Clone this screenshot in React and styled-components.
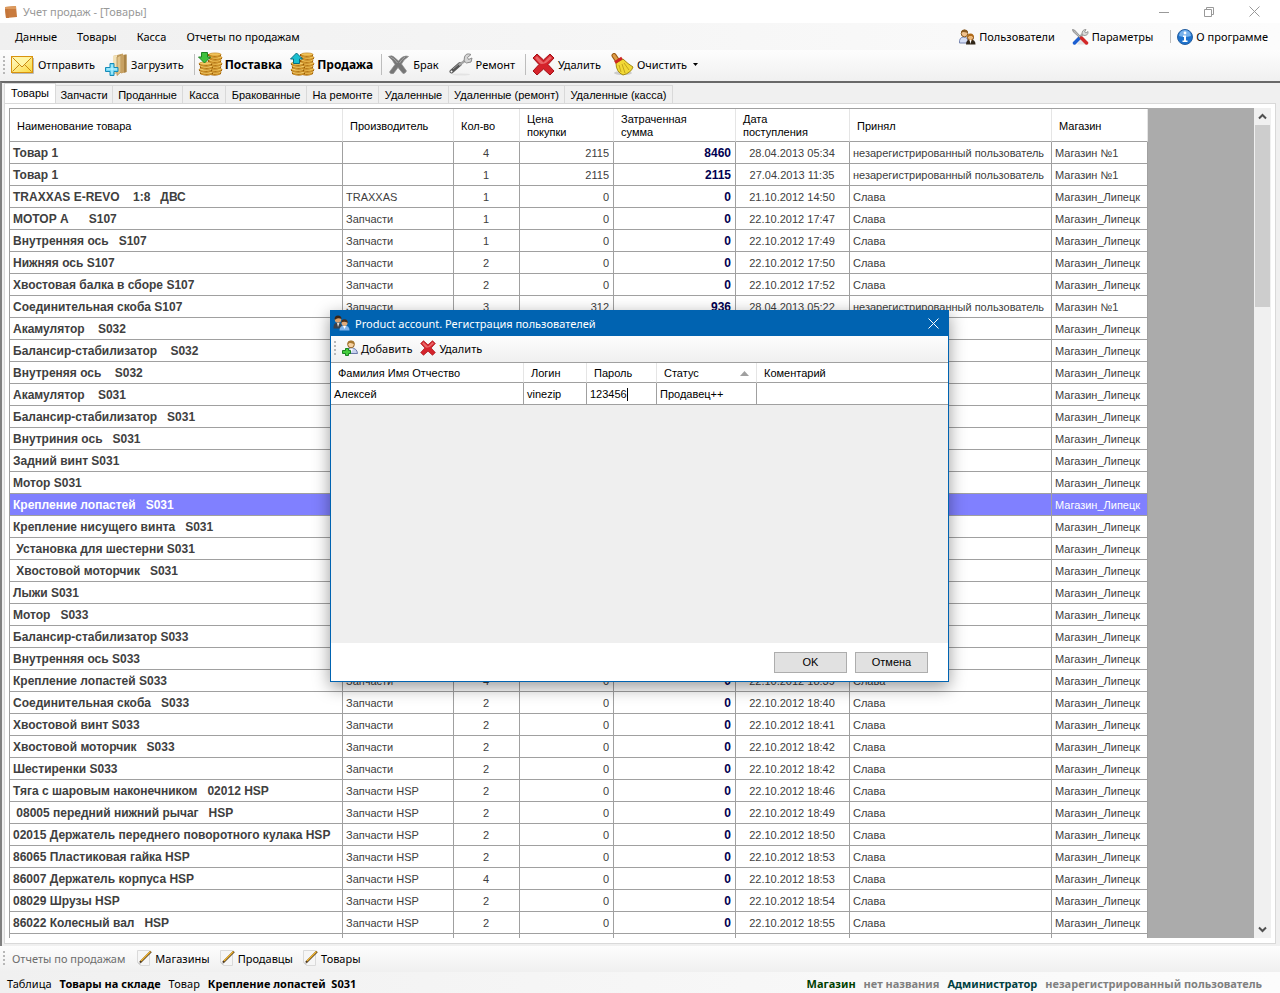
import React from 'react';
import styled, { createGlobalStyle } from 'styled-components';

const GlobalStyle = createGlobalStyle`
  * {
    box-sizing: border-box;
  }
  body {
    margin: 0;
    background: #f0f0f0;
    color: #000;
    font: 11px 'Noto Sans', 'Open Sans', sans-serif;
  }
  button, input {
    font: inherit;
    color: inherit;
    margin: 0;
    padding: 0;
    border: 0;
    background: none;
  }
  svg {
    display: block;
    flex: none;
  }
`;

const Window = styled.div`
  position: relative;
  display: flex;
  flex-direction: column;
  height: 100vh;
  overflow: hidden;
`;

/* title bar */
const TitleBar = styled.header`
  display: flex;
  align-items: center;
  height: 23px;
  padding: 0 9px 0 4px;
  gap: 5px;
  background: #fff;
  color: #999;
`;
const Title = styled.h1`
  flex: 1;
  margin: 0;
  font-size: 11px;
  font-weight: 400;
`;
const WindowButton = styled.button`
  display: flex;
  align-items: center;
  justify-content: center;
  width: 34px;
  height: 20px;
  margin-left: 6px;
`;

/* menu */
const MenuBar = styled.nav`
  display: flex;
  align-items: center;
  height: 27px;
  padding: 0 12px 0 15px;
  background: linear-gradient(to right, #f0f0f0, #fcfcfc);
`;
const MenuItem = styled.button`
  display: flex;
  align-items: center;
  gap: 3px;
  margin-right: ${(props) => props.gap ?? 20}px;
`;
const Spacer = styled.div`
  flex: 1;
`;

/* tool strips */
const Toolbar = styled.div`
  display: flex;
  align-items: center;
  height: ${(props) => props.height}px;
  padding: 0 0 2px 3px;
  background: linear-gradient(#fdfdfd, #f0f0f0);
  border-radius: 0 0 3px 0;
`;
const Grip = styled.div`
  width: 2px;
  height: ${(props) => props.height}px;
  margin-right: ${(props) => props.gap}px;
  background: repeating-linear-gradient(#b8b8b8 0 2px, transparent 2px 4px);
`;
const ToolButton = styled.button`
  display: flex;
  align-items: center;
  gap: ${(props) => props.gap || 3}px;
  margin-right: ${(props) => props.space || 10}px;
  font-size: ${(props) => (props.strong ? 12 : 11)}px;
  font-weight: ${(props) => (props.strong ? 700 : 400)};
  white-space: nowrap;
`;
const Separator = styled.div`
  width: 1px;
  height: ${(props) => props.height || 21}px;
  margin-right: ${(props) => props.gap || 6}px;
  background: #bdbdbd;
`;

/* tabs and grid */
const Workspace = styled.main`
  display: flex;
  flex-direction: column;
  flex: 1;
  min-height: 0;
  padding: 0 4px 2px 2px;
  border-top: 2px solid #696969;
  border-left: 2px solid #808080;
`;
const TabList = styled.div`
  display: flex;
  align-items: flex-end;
  height: 20px;
  font-family: 'Liberation Sans', sans-serif;
`;
const Tab = styled.button`
  height: ${(props) => (props.active ? 20 : 18)}px;
  width: ${(props) => props.width}px;
  padding-bottom: ${(props) => (props.active ? 2 : 0)}px;
  border: 1px solid #d9d9d9;
  border-left-width: ${(props) => (props.active ? 1 : 0)}px;
  border-bottom: 0;
  background: ${(props) => (props.active ? '#fff' : '#f0f0f0')};
  white-space: nowrap;
`;
const Panel = styled.section`
  display: flex;
  flex: 1;
  min-height: 0;
  padding: 4px 4px 5px 4px;
  border: 1px solid #d9d9d9;
  background: #fff;
`;
const GridArea = styled.div`
  flex: 1;
  min-width: 0;
  overflow: hidden;
  background: #ababab;
`;
const Grid = styled.table`
  table-layout: fixed;
  width: ${(props) => props.width};
  border-collapse: separate;
  border-spacing: 0;
  border-top: 1px solid #a0a0a0;
  border-left: ${(props) => (props.flush ? 0 : 1)}px solid #a0a0a0;
  background: #fff;
  font-family: 'Liberation Sans', sans-serif;
  font-size: 11px;
  line-height: 13px;

  th:last-child,
  td:last-child {
    border-right-width: ${(props) => (props.flush ? 0 : 1)}px;
  }
`;
const HeadCell = styled.th`
  height: ${(props) => props.height}px;
  padding: 2px 7px 0;
  border-right: 1px solid #e5e5e5;
  border-bottom: 1px solid #a0a0a0;
  font-weight: 400;
  text-align: left;
  white-space: pre-line;
`;
const Row = styled.tr`
  height: 22px;
  background: ${(props) => (props.selected ? '#8080ff' : '#fff')};
  color: ${(props) => (props.selected ? '#fff' : '#404040')};
`;
const Cell = styled.td`
  height: 22px;
  padding: 2px 4px 0 3px;
  border-right: 1px solid #a0a0a0;
  border-bottom: 1px solid #a0a0a0;
  text-align: ${(props) => props.align || 'left'};
  white-space: pre;
  overflow: hidden;
`;
const NameCell = styled(Cell)`
  font-size: 12px;
  font-weight: 700;
`;
const SumCell = styled(Cell)`
  color: #000050;
  font-size: 12px;
  font-weight: 700;
`;
const ScrollBar = styled.div`
  display: flex;
  flex-direction: column;
  align-items: center;
  width: 17px;
  padding: 0 1px;
  background: #f0f0f0;
`;
const ScrollArrow = styled.button`
  display: flex;
  align-items: center;
  justify-content: center;
  width: 15px;
  height: 17px;
`;
const ScrollThumb = styled.div`
  width: 15px;
  height: 182px;
  background: #cdcdcd;
`;

/* status bar */
const StatusBar = styled.footer`
  display: flex;
  align-items: center;
  height: 21px;
  padding: 2px 18px 0 7px;
  gap: 8px;
  background: linear-gradient(to right, #f0f0f0, #fcfcfc);
  white-space: pre;
`;
const StatusText = styled.span`
  color: ${(props) => props.color || '#000'};
  font-weight: ${(props) => (props.strong ? 700 : 400)};
`;
const Muted = styled.span`
  margin-right: 12px;
  color: #6d6d6d;
`;

/* dialog */
const Overlay = styled.div`
  position: absolute;
  inset: 0 1px 1px 0;
  display: flex;
  align-items: center;
  justify-content: center;
`;
const Dialog = styled.div`
  display: flex;
  flex-direction: column;
  width: 619px;
  height: 372px;
  border: 1px solid #0063b1;
  background: #fff;
  box-shadow: 0 5px 16px rgba(0, 0, 0, 0.4);
`;
const DialogTitle = styled.div`
  display: flex;
  align-items: center;
  height: 25px;
  padding: 0 9px 1px 2px;
  gap: 5px;
  background: #0063b1;
  color: #fff;
`;
const DialogHeading = styled.h2`
  flex: 1;
  margin: 0;
  font-size: 11px;
  font-weight: 400;
`;
const DialogBody = styled.div`
  flex: 1;
  background: #efefef;
`;
const SortHead = styled.div`
  display: flex;
  align-items: center;
  justify-content: space-between;
`;
const PasswordInput = styled.input`
  display: block;
  width: 38px;
  height: 13px;
  border-right: 1px solid #000;
`;
const DialogFooter = styled.div`
  display: flex;
  align-items: center;
  justify-content: flex-end;
  gap: 8px;
  height: 38px;
  padding-right: 20px;
  font-family: 'Liberation Sans', sans-serif;
`;
const DialogButton = styled.button`
  width: 73px;
  height: 21px;
  border: 1px solid #adadad;
  background: #e1e1e1;
`;

/* icons */
const BoxIcon = () => (
  <svg width="14" height="14" viewBox="0 0 14 14">
    <path d="M1 2 L12 1 L13 12 L2 13 Z" fill="#c97b3e" />
    <path d="M1 2 L12 1 L12 4 L1 4 Z" fill="#dc9a5e" />
    <path d="M1 4 L2 13 L5 13 L4 4 Z" fill="#c4763a" />
  </svg>
);
const MailIcon = () => (
  <svg width="23" height="18" viewBox="0 0 23 18">
    <defs>
      <linearGradient id="mail" x1="0" y1="0" x2="1" y2="1">
        <stop offset="0" stopColor="#fffbd0" />
        <stop offset="1" stopColor="#fbd93c" />
      </linearGradient>
    </defs>
    <path d="M1 17.5 H22.5 V2" stroke="#b9b9b9" fill="none" />
    <rect x="0.5" y="0.5" width="21" height="16" fill="url(#mail)" stroke="#d9930d" />
    <path d="M1.5 15.5 L8.5 8.5 M20.5 15.5 L13.5 8.5" stroke="#c88912" />
    <path d="M1.5 1.5 L11 11 L20.5 1.5" fill="#fff6a4" stroke="#c88912" />
  </svg>
);
const LoadIcon = () => (
  <svg width="23" height="24" viewBox="0 0 23 24">
    <path d="M8 3 L18 0.5 V19 L8 21 Z" fill="#c9a566" />
    <path d="M8 3 L12 2 V19 L8 20.5 Z" fill="#f3e2b8" />
    <path d="M12 4 L16 2 V19 L12 22.5 Z" fill="#e2c48a" stroke="#a88449" strokeWidth="0.7" />
    <path d="M16 2 L21.5 1.5 V19 L16 20.5 Z" fill="#c7a163" />
    <path d="M19 2 L21.5 1.5 V19 L19 19.8 Z" fill="#a98346" />
    <path d="M5 10.5 H9 V14.5 H13 V18.5 H9 V22.5 H5 V18.5 H0.5 V14.5 H5 Z" fill="#72d8f5" stroke="#168bb8" />
    <path d="M7 12 V21 M2 16 H12" stroke="#c5f5ff" />
  </svg>
);
const CoinsIcon = ({ up }) => (
  <svg width="25" height="25" viewBox="0 0 25 25">
    {[21, 18, 15, 12, 9, 6, 3].map((y, i) => (
      <g key={y}>
        <path d={`M${10 + (i % 2)} ${y - 1} V${y + 1} Q17 ${y + 4} ${23 + (i % 2)} ${y + 1} V${y - 1} Z`} fill="#935505" />
        <path d={`M${11 + (i % 2)} ${y + 1} Q17 ${y + 3} ${22 + (i % 2)} ${y + 1}`} stroke="#d99f33" fill="none" />
        <ellipse cx={17 + (i % 2)} cy={y - 0.5} rx="6" ry="1.6" fill="#f0c258" stroke="#c08018" strokeWidth="0.6" />
      </g>
    ))}
    {[21, 18, 15, 12].map((y, i) => (
      <g key={y}>
        <path d={`M${2 - (i % 2)} ${y - 1} V${y + 1} Q9 ${y + 4} ${15 - (i % 2)} ${y + 1} V${y - 1} Z`} fill="#8e5204" />
        <path d={`M${3 - (i % 2)} ${y + 1} Q9 ${y + 3} ${14 - (i % 2)} ${y + 1}`} stroke="#d89d30" fill="none" />
        <ellipse cx={8.5 - (i % 2)} cy={y - 0.5} rx="6.3" ry="1.6" fill="#f3ca66" stroke="#bd7d18" strokeWidth="0.6" />
      </g>
    ))}
    {up ? (
      <path d="M6.5 1 L12.5 7 H9.5 V11.5 H3.5 V7 H0.5 Z" fill="#19bfd0" stroke="#0a6e80" />
    ) : (
      <path d="M3.5 0.5 H9.5 V5 H12.5 L6.5 11 L0.5 5 H3.5 Z" fill="#3fc13c" stroke="#1d8222" />
    )}
  </svg>
);
const ScrapIcon = () => (
  <svg width="21" height="20" viewBox="0 0 21 20">
    <path
      d="M0.5 1.5 Q4 0 6 2 L10.5 6 Q14 1 18 1 L20.5 1.5 Q16 4 13.5 9 L18.5 16 Q17 19 15 18.5 L10 12.5 L5.5 18.5 Q2 19.5 1.5 17 L7 9.5 Q5 5 0.5 1.5 Z"
      fill="#767676"
      stroke="#8c8c8c"
      strokeWidth="0.7"
      strokeLinejoin="round"
    />
    <path d="M2.5 2 Q6 3 9.5 8 M17 2 Q13 5 11.5 8" stroke="#a8a8a8" fill="none" />
  </svg>
);
const WrenchIcon = () => (
  <svg width="24" height="23" viewBox="0 0 24 23">
    <ellipse cx="12" cy="21.5" rx="9" ry="1" fill="#e3e3e3" />
    <path d="M2.5 18.5 L11 11" stroke="#555" strokeWidth="4" strokeLinecap="round" />
    <path d="M4 16 L11 10" stroke="#999" strokeWidth="1" />
    <path d="M10 12 L17 7" stroke="#a5a5a5" strokeWidth="2.5" />
    <path
      d="M15 8 L17.5 10 L22 9 L23 5 L19.5 6.5 L18.5 4.5 L22 1.5 Q17 -0.5 15.5 4 Z"
      fill="#d5d5d5"
      stroke="#8b8b8b"
    />
    <circle cx="2.5" cy="18.5" r="1" fill="#fff" />
  </svg>
);
const DeleteIcon = ({ size = 23 }) => (
  <svg width={size} height={size} viewBox="0 0 23 23">
    <path
      d="M5 1 L11.5 7 L18 1 L22 5 L16 11.5 L22 18 L18 22 L11.5 16 L5 22 L1 18 L7 11.5 L1 5 Z"
      fill="#d5232b"
      stroke="#a31016"
      strokeLinejoin="round"
    />
    <path d="M3 5 L5 3 L11.5 9.5 L18 3 L20 5 L14 10 Q9 12 7.5 10 Z" fill="#f07c7c" opacity="0.75" />
  </svg>
);
const BroomIcon = () => (
  <svg width="23" height="23" viewBox="0 0 23 23">
    <ellipse cx="12" cy="20" rx="9" ry="2" fill="#ccc" />
    <path d="M3 2.5 L6 7" stroke="#9a5a14" strokeWidth="5" strokeLinecap="round" />
    <path d="M3 2.5 L6 7" stroke="#df9d47" strokeWidth="3" strokeLinecap="round" />
    <path d="M5 10 L12 6 Q17 11 22 14 Q20 20 12 22 Q5 19 5 10 Z" fill="#f1d835" stroke="#a48b12" />
    <path d="M8 12 L10 19 M11 11 L14 20 M13 10 L18 17" stroke="#c4a51b" />
    <path d="M4 9.5 L11 5" stroke="#cf2521" strokeWidth="3" />
  </svg>
);
const UsersIcon = () => (
  <svg width="17" height="16" viewBox="0 0 17 16">
    <path d="M0.5 14 Q0 8 5 8 Q9 8 9.5 14 Z" fill="#d5def5" stroke="#7685b0" />
    <circle cx="5.5" cy="4.5" r="3.3" fill="#f1c28d" stroke="#885922" />
    <path d="M2 4 Q2 0.5 5.5 0.5 Q9 0.5 9 4 Q6 3 4 3 Z" fill="#885921" />
    <path d="M7 15.5 Q7 10.5 11.5 10.5 Q16.5 10.5 16.5 15.5 Z" fill="#312719" />
    <circle cx="11.5" cy="8.5" r="3" fill="#edb879" stroke="#77420d" />
    <path d="M8 9 Q8 4.5 11.5 4.5 Q15 4.5 15 9 L13 7 H10 Z" fill="#b06a18" />
    <path d="M10.5 11 L11.5 15 L12.5 11 Z" fill="#fff" />
  </svg>
);
const AccountsIcon = () => (
  <svg width="17" height="16" viewBox="0 0 17 16">
    <path d="M0.5 13.5 Q0 7.5 5 7.5 Q9 7.5 9 13.5 Z" fill="#3d4148" />
    <circle cx="5" cy="4.5" r="3.2" fill="#d9a06c" />
    <path d="M1.5 4.5 Q1.5 0.5 5 0.5 Q8.5 0.5 8.5 4 Q5 2.5 2.5 4.5 Z" fill="#3a2415" />
    <path d="M4 8 L5 12 L6.5 8 Z" fill="#e9e4dc" />
    <path d="M6.5 15.5 Q6.5 10.5 11.5 10.5 Q16.5 10.5 16.5 15.5 Z" fill="#7db2ea" />
    <circle cx="11.5" cy="8" r="3" fill="#e0ab7c" />
    <path d="M8.2 8 Q8 4.2 11.5 4.2 Q15 4.2 14.8 8 Q12 6 9.5 7 Z" fill="#4c2f1a" />
    <path d="M10 11 L11.5 14 L13 11 Z" fill="#fff" />
  </svg>
);
const AddUserIcon = () => (
  <svg width="16" height="16" viewBox="0 0 16 16">
    <path d="M3 13.5 Q3 8 9 8 Q15 8 15.5 13.5 Z" fill="#c9d3ef" stroke="#6b7aaa" />
    <circle cx="9" cy="4.5" r="3.3" fill="#f7d1a0" stroke="#8f6227" />
    <path d="M5.5 4.5 Q5 0.5 9 0.5 Q13 0.5 12.5 4.5 Q10 2.5 7.5 3 Z" fill="#a87830" />
    <path d="M8 8.5 L9.5 12 L11 8.5 Z" fill="#fff" />
    <path d="M3.5 8.5 H6.5 V10.5 H8.5 V13.5 H6.5 V15.5 H3.5 V13.5 H0.5 V10.5 H3.5 Z" fill="#45ce3d" stroke="#198421" />
  </svg>
);
const ToolsIcon = () => (
  <svg width="17" height="16" viewBox="0 0 17 16">
    <path d="M5 15.5 H14 L9 10 Z" fill="#e2e2e2" />
    <path d="M11 5 L7 9" stroke="#a8a8a8" strokeWidth="2.5" />
    <path d="M10 5 Q10 0.5 14 0.5 L12.5 3 L14 4 L16 2.5 Q16.5 6.5 12 6.5 Z" fill="#ddd" stroke="#9a9a9a" />
    <path d="M7.5 9 L2.5 14" stroke="#1c5ed0" strokeWidth="3.5" strokeLinecap="round" />
    <path d="M0.5 0.5 L2.5 1 L9 8 L8 9 L1 2.5 Z" fill="#bbb" stroke="#777" strokeWidth="0.7" />
    <path d="M9.5 9 L14.5 14" stroke="#d22828" strokeWidth="3.5" strokeLinecap="round" />
  </svg>
);
const InfoIcon = () => (
  <svg width="16" height="16" viewBox="0 0 16 16">
    <circle cx="8" cy="8" r="7.5" fill="#1d72cd" stroke="#275f9f" />
    <path d="M2 7 A6 6 0 0 1 14 7 Q8 9 2 7 Z" fill="#77b2ec" />
    <circle cx="8" cy="4" r="1.4" fill="#fff" />
    <path d="M6 6.5 H9 V11.5 H10.5 V13 H5.5 V11.5 H7 V8 H6 Z" fill="#fff" />
  </svg>
);
const ReportIcon = () => (
  <svg width="15" height="16" viewBox="0 0 15 16">
    <path d="M0.5 0.5 H12.5 V15.5 H3.5 L0.5 12.5 Z" fill="#f6f6f6" stroke="#dadada" />
    <path d="M0.5 12.5 L3.5 15.5 V12.5 Z" fill="#c8c8c8" />
    <path d="M3 12.5 L14 1.5" stroke="#4d3920" strokeWidth="2.2" />
    <path d="M4 11 L13.5 1.5" stroke="#f3b52b" strokeWidth="1.2" />
  </svg>
);
const CloseIcon = ({ size = 11 }) => (
  <svg width={size} height={size} viewBox="0 0 11 11">
    <path d="M0.5 0.5 L10.5 10.5 M10.5 0.5 L0.5 10.5" stroke="currentColor" />
  </svg>
);
const MinimizeIcon = () => (
  <svg width="10" height="10" viewBox="0 0 10 10">
    <path d="M0 5.5 H10" stroke="currentColor" />
  </svg>
);
const RestoreIcon = () => (
  <svg width="10" height="10" viewBox="0 0 10 10">
    <path d="M0.5 2.5 H7.5 V9.5 H0.5 Z M2.5 2 V0.5 H9.5 V7.5 H8" fill="none" stroke="currentColor" />
  </svg>
);
const Chevron = ({ down }) => (
  <svg width="9" height="7" viewBox="0 0 9 7">
    <path d={down ? 'M1 1.5 L4.5 5 L8 1.5' : 'M1 5.5 L4.5 2 L8 5.5'} fill="none" stroke="#505050" strokeWidth="2" />
  </svg>
);
const CaretIcon = () => (
  <svg width="8" height="3" viewBox="0 0 8 3">
    <path d="M3 0 H8 L5.5 3 Z" fill="#000" />
  </svg>
);
const SortIcon = () => (
  <svg width="9" height="5" viewBox="0 0 9 5">
    <path d="M4.5 0 L9 5 H0 Z" fill="#a0a0a0" />
  </svg>
);

/* data */
const tabs = [
  ['Товары', 52],
  ['Запчасти', 57],
  ['Проданные', 70],
  ['Касса', 43],
  ['Бракованные', 81],
  ['На ремонте', 72],
  ['Удаленные', 70],
  ['Удаленные (ремонт)', 116],
  ['Удаленные (касса)', 108],
];

const columns = [
  ['Наименование товара', 333],
  ['Производитель', 111],
  ['Кол-во', 66],
  ['Цена\nпокупки', 94],
  ['Затраченная\nсумма', 122],
  ['Дата\nпоступления', 114],
  ['Принял', 202],
  ['Магазин', 96],
];

const guest = 'незарегистрированный пользователь';
const lipetsk = 'Магазин_Липецк';

const goods = [
  ['Товар 1', '', 4, 2115, 8460, '28.04.2013 05:34', guest, 'Магазин №1'],
  ['Товар 1', '', 1, 2115, 2115, '27.04.2013 11:35', guest, 'Магазин №1'],
  ['TRAXXAS E-REVO    1:8   ДВС', 'TRAXXAS', 1, 0, 0, '21.10.2012 14:50', 'Слава'],
  ['МОТОР А      S107', 'Запчасти', 1, 0, 0, '22.10.2012 17:47', 'Слава'],
  ['Внутренняя ось   S107', 'Запчасти', 1, 0, 0, '22.10.2012 17:49', 'Слава'],
  ['Нижняя ось S107', 'Запчасти', 2, 0, 0, '22.10.2012 17:50', 'Слава'],
  ['Хвостовая балка в сборе S107', 'Запчасти', 2, 0, 0, '22.10.2012 17:52', 'Слава'],
  ['Соединительная скоба S107', 'Запчасти', 3, 312, 936, '28.04.2013 05:22', guest, 'Магазин №1'],
  ['Акамулятор    S032'],
  ['Балансир-стабилизатор    S032'],
  ['Внутреняя ось    S032'],
  ['Акамулятор    S031'],
  ['Балансир-стабилизатор   S031'],
  ['Внутриния ось   S031'],
  ['Задний винт S031'],
  ['Мотор S031'],
  ['Крепление лопастей   S031'],
  ['Крепление нисущего винта   S031'],
  [' Установка для шестерни S031'],
  [' Хвостовой моторчик   S031'],
  ['Лыжи S031'],
  ['Мотор   S033'],
  ['Балансир-стабилизатор S033'],
  ['Внутренняя ось S033'],
  ['Крепление лопастей S033', 'Запчасти', 4, 0, 0, '22.10.2012 18:39', 'Слава'],
  ['Соединительная скоба   S033', 'Запчасти', 2, 0, 0, '22.10.2012 18:40', 'Слава'],
  ['Хвостовой винт S033', 'Запчасти', 2, 0, 0, '22.10.2012 18:41', 'Слава'],
  ['Хвостовой моторчик   S033', 'Запчасти', 2, 0, 0, '22.10.2012 18:42', 'Слава'],
  ['Шестиренки S033', 'Запчасти', 2, 0, 0, '22.10.2012 18:42', 'Слава'],
  ['Тяга с шаровым наконечником   02012 HSP', 'Запчасти HSP', 2, 0, 0, '22.10.2012 18:46', 'Слава'],
  [' 08005 передний нижний рычаг   HSP', 'Запчасти HSP', 2, 0, 0, '22.10.2012 18:49', 'Слава'],
  ['02015 Держатель переднего поворотного кулака HSP', 'Запчасти HSP', 2, 0, 0, '22.10.2012 18:50', 'Слава'],
  ['86065 Пластиковая гайка HSP', 'Запчасти HSP', 2, 0, 0, '22.10.2012 18:53', 'Слава'],
  ['86007 Держатель корпуса HSP', 'Запчасти HSP', 4, 0, 0, '22.10.2012 18:53', 'Слава'],
  ['08029 Шрузы HSP', 'Запчасти HSP', 2, 0, 0, '22.10.2012 18:54', 'Слава'],
  ['86022 Колесный вал   HSP', 'Запчасти HSP', 2, 0, 0, '22.10.2012 18:55', 'Слава'],
  ['', '', '', '', '', '', '', ''],
];
const selectedRow = 16;

const GoodsTable = () => (
  <Grid width="1139px">
    <colgroup>
      {columns.map(([title, width]) => (
        <col key={title} style={{ width }} />
      ))}
    </colgroup>
    <thead>
      <tr>
        {columns.map(([title]) => (
          <HeadCell key={title} height={33}>{title}</HeadCell>
        ))}
      </tr>
    </thead>
    <tbody>
      {goods.map(([name, maker, count, price, sum, date, user, shop = lipetsk], i) => (
        <Row key={i} selected={i === selectedRow}>
          <NameCell>{name}</NameCell>
          <Cell>{maker}</Cell>
          <Cell align="center">{count}</Cell>
          <Cell align="right">{price}</Cell>
          <SumCell align="right">{sum}</SumCell>
          <Cell align="center">{date}</Cell>
          <Cell>{user}</Cell>
          <Cell>{shop}</Cell>
        </Row>
      ))}
    </tbody>
  </Grid>
);

const UsersDialog = () => (
  <Overlay>
    <Dialog role="dialog" aria-labelledby="users-title">
      <DialogTitle>
        <AccountsIcon />
        <DialogHeading id="users-title">Product account. Регистрация пользователей</DialogHeading>
        <button aria-label="Закрыть"><CloseIcon /></button>
      </DialogTitle>
      <Toolbar height={26}>
        <Grip height={14} gap={6} />
        <ToolButton space={8}><AddUserIcon />Добавить</ToolButton>
        <ToolButton space={8}><DeleteIcon size={16} />Удалить</ToolButton>
      </Toolbar>
      <Grid width="100%" flush>
        <colgroup>
          <col style={{ width: 193 }} />
          <col style={{ width: 63 }} />
          <col style={{ width: 70 }} />
          <col style={{ width: 100 }} />
          <col />
        </colgroup>
        <thead>
          <tr>
            <HeadCell height={20}>Фамилия Имя Отчество</HeadCell>
            <HeadCell height={20}>Логин</HeadCell>
            <HeadCell height={20}>Пароль</HeadCell>
            <HeadCell height={20}><SortHead>Статус<SortIcon /></SortHead></HeadCell>
            <HeadCell height={20}>Коментарий</HeadCell>
          </tr>
        </thead>
        <tbody>
          <tr>
            <Cell>Алексей</Cell>
            <Cell>vinezip</Cell>
            <Cell><PasswordInput aria-label="Пароль" defaultValue="123456" /></Cell>
            <Cell>Продавец++</Cell>
            <Cell />
          </tr>
        </tbody>
      </Grid>
      <DialogBody />
      <DialogFooter>
        <DialogButton>OK</DialogButton>
        <DialogButton>Отмена</DialogButton>
      </DialogFooter>
    </Dialog>
  </Overlay>
);

const App = () => {
  return (
    <Window>
      <GlobalStyle />
      <TitleBar>
        <BoxIcon />
        <Title>Учет продаж - [Товары]</Title>
        <WindowButton aria-label="Свернуть"><MinimizeIcon /></WindowButton>
        <WindowButton aria-label="Восстановить"><RestoreIcon /></WindowButton>
        <WindowButton aria-label="Закрыть"><CloseIcon /></WindowButton>
      </TitleBar>
      <MenuBar>
        <MenuItem>Данные</MenuItem>
        <MenuItem>Товары</MenuItem>
        <MenuItem>Касса</MenuItem>
        <MenuItem>Отчеты по продажам</MenuItem>
        <Spacer />
        <MenuItem gap={17}><UsersIcon />Пользователи</MenuItem>
        <MenuItem gap={17}><ToolsIcon />Параметры</MenuItem>
        <Separator height={13} />
        <MenuItem gap={0}><InfoIcon />О программе</MenuItem>
      </MenuBar>
      <Toolbar height={31}>
        <Grip height={18} gap={6} />
        <ToolButton gap={4}><MailIcon />Отправить</ToolButton>
        <ToolButton><LoadIcon />Загрузить</ToolButton>
        <Separator gap={3} />
        <ToolButton gap={2} space={8} strong><CoinsIcon />Поставка</ToolButton>
        <ToolButton gap={2} space={8} strong><CoinsIcon up />Продажа</ToolButton>
        <Separator />
        <ToolButton gap={4}><ScrapIcon />Брак</ToolButton>
        <ToolButton><WrenchIcon />Ремонт</ToolButton>
        <Separator />
        <ToolButton><DeleteIcon />Удалить</ToolButton>
        <ToolButton><BroomIcon />Очистить<CaretIcon /></ToolButton>
      </Toolbar>
      <Workspace>
        <TabList role="tablist">
          {tabs.map(([title, width], i) => (
            <Tab key={title} role="tab" aria-selected={i === 0} active={i === 0} width={width}>
              {title}
            </Tab>
          ))}
        </TabList>
        <Panel>
          <GridArea>
            <GoodsTable />
          </GridArea>
          <ScrollBar>
            <ScrollArrow aria-label="Вверх"><Chevron /></ScrollArrow>
            <ScrollThumb />
            <Spacer />
            <ScrollArrow aria-label="Вниз"><Chevron down /></ScrollArrow>
          </ScrollBar>
        </Panel>
      </Workspace>
      <Toolbar height={26}>
        <Grip height={14} gap={7} />
        <Muted>Отчеты по продажам</Muted>
        <ToolButton><ReportIcon />Магазины</ToolButton>
        <ToolButton><ReportIcon />Продавцы</ToolButton>
        <ToolButton><ReportIcon />Товары</ToolButton>
      </Toolbar>
      <StatusBar>
        <StatusText>Таблица</StatusText>
        <StatusText strong>Товары на складе</StatusText>
        <StatusText>Товар</StatusText>
        <StatusText strong>Крепление лопастей  S031</StatusText>
        <Spacer />
        <StatusText strong color="#004000">Магазин</StatusText>
        <StatusText strong color="#808080">нет названия</StatusText>
        <StatusText strong color="#004040">Администратор</StatusText>
        <StatusText strong color="#808080">незарегистрированный пользователь</StatusText>
      </StatusBar>
      <UsersDialog />
    </Window>
  );
};

export default App;
